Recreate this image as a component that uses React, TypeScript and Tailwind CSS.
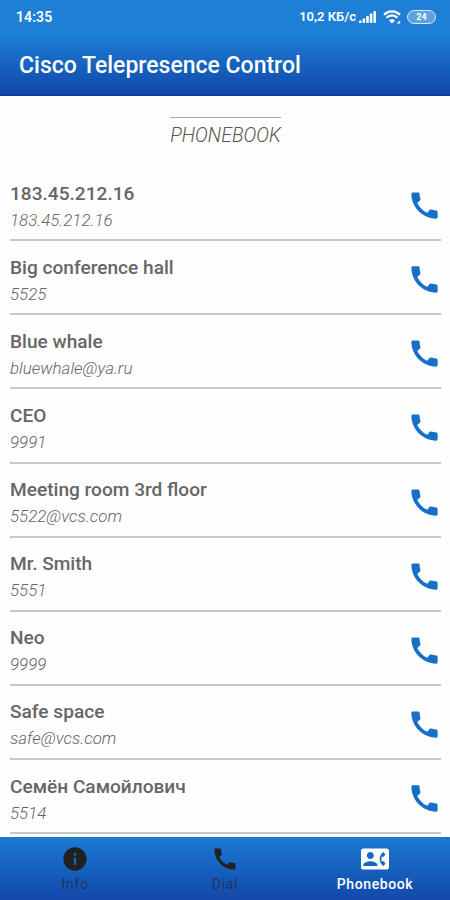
import type { ComponentType } from 'react'
import { MdContactPhone, MdInfo } from 'react-icons/md'

type Contact = { name: string; address: string }

const contacts: Contact[] = [
  { name: '183.45.212.16', address: '183.45.212.16' },
  { name: 'Big conference hall', address: '5525' },
  { name: 'Blue whale', address: 'bluewhale@ya.ru' },
  { name: 'CEO', address: '9991' },
  { name: 'Meeting room 3rd floor', address: '5522@vcs.com' },
  { name: 'Mr. Smith', address: '5551' },
  { name: 'Neo', address: '9999' },
  { name: 'Safe space', address: 'safe@vcs.com' },
  { name: 'Семён Самойлович', address: '5514' },
]

function PhoneIcon({ className }: { className?: string }) {
  return (
    <svg className={className} viewBox="0 0 24 24" fill="currentColor">
      <path d="M20.01 15.38c-1.23 0-2.42-.2-3.53-.56-.35-.12-.74-.03-1.01.24l-1.57 1.97c-2.83-1.35-5.48-3.9-6.89-6.83l1.95-1.66c.27-.28.35-.67.24-1.02-.37-1.11-.56-2.3-.56-3.53 0-.54-.45-.99-.99-.99H4.19C3.65 3 3 3.24 3 3.99 3 13.28 10.73 21 20.01 21c.71 0 .99-.63.99-1.18v-3.45c0-.54-.45-.99-.99-.99z" />
    </svg>
  )
}

const tabs: { label: string; icon: ComponentType<{ className?: string }>; active?: boolean }[] = [
  { label: 'Info', icon: MdInfo },
  { label: 'Dial', icon: PhoneIcon },
  { label: 'Phonebook', icon: MdContactPhone, active: true },
]

function StatusBar() {
  return (
    <div className="flex h-[34px] items-center justify-between pr-[14px] pl-4 text-[13px] leading-4 font-semibold">
      <span className="text-[14px] tracking-[0.1px]">14:35</span>
      <div className="flex items-center">
        <span>10,2 КБ/с</span>
        <svg className="ml-[3px] h-3 w-[17px]" viewBox="0 0 17 12" fill="currentColor">
          <rect x="0" y="9.5" width="2.6" height="2.5" rx="0.8" />
          <rect x="3.6" y="7.5" width="2.6" height="4.5" rx="0.8" />
          <rect x="7.2" y="5" width="2.6" height="7" rx="0.8" />
          <rect x="10.8" y="2.5" width="2.6" height="9.5" rx="0.8" />
          <rect x="14.4" y="0" width="2.6" height="12" rx="0.8" />
        </svg>
        <svg
          className="ml-[7px] h-[14px] w-[18px]"
          viewBox="0 0 18 14"
          fill="none"
          stroke="currentColor"
          strokeWidth="2.3"
        >
          <path d="M1 4.8C5.5.3 12.5.3 17 4.8" />
          <path d="M3.6 7.7c3-3 7.8-3 10.8 0" />
          <path d="M6 10.4c1.6-1.5 4.4-1.5 6 0L9 13.4z" fill="currentColor" stroke="none" />
          <path d="M13.5 13.4h3.6v-2.8z" fill="currentColor" stroke="none" />
        </svg>
        <span className="ml-[6px] flex h-[14px] w-[29px] items-center justify-center rounded-full border-[1.5px] border-[#d5e8f9] bg-[#5da3e2] text-[9px] leading-none font-bold">
          24
        </span>
      </div>
    </div>
  )
}

function ContactRow({ contact }: { contact: Contact }) {
  return (
    <li className="flex h-[74.15px] shrink-0 items-start justify-between border-b-2 border-[#c8c8c8] pt-[14.5px]">
      <div>
        <p className="text-[19.1px] leading-[24px] font-medium text-[#666]">{contact.name}</p>
        <p className="mt-[2px] text-[16.9px] leading-[24px] font-light text-[#666] italic">
          {contact.address}
        </p>
      </div>
      <button type="button" className="mt-[6.5px] -mr-px" aria-label={`Call ${contact.name}`}>
        <PhoneIcon className="size-[35px] text-[#176fc9]" />
      </button>
    </li>
  )
}

export default function App() {
  return (
    <div className="flex h-[900px] w-[450px] flex-col overflow-hidden bg-[#fefefe] font-['Roboto',sans-serif]">
      <header className="h-24 shrink-0 border-b border-[#0c3795] bg-linear-to-b from-[#1e7fd6] from-35% to-[#1247aa] text-white">
        <StatusBar />
        <h1 className="mt-[17px] pl-[19px] text-[23px] leading-[30px] font-medium">
          Cisco Telepresence Control
        </h1>
      </header>

      <main className="flex min-h-0 flex-1 flex-col overflow-hidden pr-[9px] pl-[10px]">
        <h2 className="mt-[21px] self-center border-t border-[#a8a8a8] pt-[6px] text-[19.4px] leading-[24px] font-light text-[#555] italic">
          PHONEBOOK
        </h2>
        <ul className="mt-[19px]">
          {contacts.map((contact) => (
            <ContactRow key={contact.name} contact={contact} />
          ))}
        </ul>
      </main>

      <nav className="grid h-[63px] shrink-0 grid-cols-3 bg-linear-to-b from-[#1c7ad2] to-[#1348ab]">
        {tabs.map(({ label, icon: Icon, active }) => (
          <button
            key={label}
            type="button"
            className={`flex flex-col items-center pt-[8px] ${active ? 'text-white' : 'text-[#212121]'}`}
          >
            <Icon className="size-7" />
            <span
              className={`mt-[3px] text-[14px] leading-4 ${
                active ? 'font-medium tracking-[0.6px]' : 'font-normal tracking-[0.7px] text-[#1c3560]'
              }`}
            >
              {label}
            </span>
          </button>
        ))}
      </nav>
    </div>
  )
}
